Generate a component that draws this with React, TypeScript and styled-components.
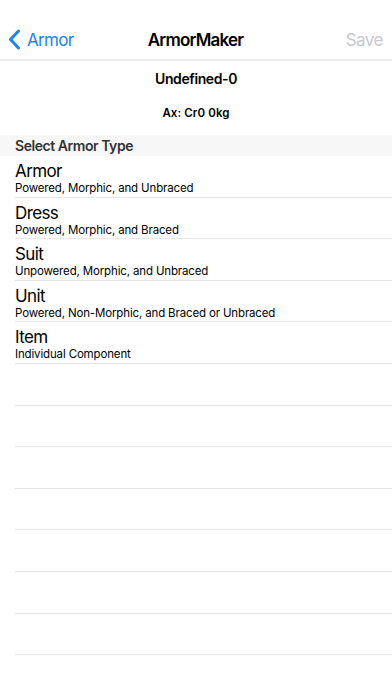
import React, { FC } from 'react'
import styled, { createGlobalStyle } from 'styled-components'

const GlobalStyle = createGlobalStyle`
  html, body {
    margin: 0;
    padding: 0;
    background: #fff;
  }
  body {
    font-family: Inter, 'Noto Sans', 'Liberation Sans', sans-serif;
    color: #000;
    -webkit-font-smoothing: antialiased;
  }
`

const Screen = styled.div`
  width: 392px;
  height: 696px;
  overflow: hidden;
  display: flex;
  flex-flow: column nowrap;
  background: #fff;
`

const NavBar = styled.div`
  height: 61px;
  flex: none;
  display: grid;
  grid-template-columns: 1fr auto 1fr;
  align-items: end;
  padding: 0 9px 9px 8px;
  box-sizing: border-box;
  border-bottom: 2px solid #ececec;
`

const BackButton = styled.div`
  display: flex;
  align-items: center;
  gap: 6px;
  color: #1a82fb;
  font-size: 17px;
  letter-spacing: -0.7px;
  svg {
    display: block;
  }
`

const Title = styled.div`
  font-size: 17px;
  font-weight: 600;
  letter-spacing: -0.8px;
`

const NavAction = styled.div<{ $disabled?: boolean }>`
  justify-self: end;
  font-size: 17px;
  letter-spacing: -0.5px;
  color: ${(p) => (p.$disabled ? '#c7c7cc' : '#1a82fb')};
`

const Summary = styled.div`
  flex: none;
  display: flex;
  flex-flow: column nowrap;
  align-items: center;
  padding: 9px 0 15px;
`

const Name = styled.div`
  font-size: 14px;
  font-weight: 600;
  line-height: 18px;
  letter-spacing: -0.4px;
`

const Stats = styled.div`
  margin-top: 18px;
  font-size: 11.5px;
  font-weight: 600;
  line-height: 14px;
  letter-spacing: 0.1px;
`

const SectionHeader = styled.div`
  flex: none;
  height: 21px;
  line-height: 21px;
  background: #f7f7f7;
  padding-left: 15px;
  font-size: 14px;
  font-weight: 600;
  color: #333;
  letter-spacing: -0.45px;
`

const List = styled.div`
  flex: 1;
  display: flex;
  flex-flow: column nowrap;
`

const Row = styled.div`
  flex: none;
  height: 41.6px;
  box-sizing: border-box;
  margin-left: 15px;
  padding-top: 5px;
  border-bottom: 1px solid #e6e6e6;
  display: flex;
  flex-flow: column nowrap;
`

const RowTitle = styled.div`
  font-size: 17px;
  line-height: 21px;
  letter-spacing: -0.6px;
`

const RowSubtitle = styled.div`
  font-size: 11.5px;
  line-height: 13px;
  letter-spacing: -0.15px;
`

const types = [
  { title: 'Armor', sub: 'Powered, Morphic, and Unbraced' },
  { title: 'Dress', sub: 'Powered, Morphic, and Braced' },
  { title: 'Suit', sub: 'Unpowered, Morphic, and Unbraced' },
  { title: 'Unit', sub: 'Powered, Non-Morphic, and Braced or Unbraced' },
  { title: 'Item', sub: 'Individual Component' },
]

const Chevron: FC = () => (
  <svg width="13" height="21" viewBox="0 0 13 21">
    <path d="M10.5 2 L2.5 10.5 L10.5 19" fill="none" stroke="#1a82fb" strokeWidth="3" strokeLinecap="round" strokeLinejoin="round" />
  </svg>
)

const App: FC = () => {
  return (
    <Screen>
      <GlobalStyle />
      <NavBar>
        <BackButton>
          <Chevron />
          Armor
        </BackButton>
        <Title>ArmorMaker</Title>
        <NavAction $disabled>Save</NavAction>
      </NavBar>
      <Summary>
        <Name>Undefined-0</Name>
        <Stats>Ax: Cr0 0kg</Stats>
      </Summary>
      <SectionHeader>Select Armor Type</SectionHeader>
      <List>
        {types.map((t) => (
          <Row key={t.title}>
            <RowTitle>{t.title}</RowTitle>
            <RowSubtitle>{t.sub}</RowSubtitle>
          </Row>
        ))}
        {Array.from({ length: 8 }).map((_, i) => (
          <Row key={`empty-${i}`} />
        ))}
      </List>
    </Screen>
  )
}

export default App
